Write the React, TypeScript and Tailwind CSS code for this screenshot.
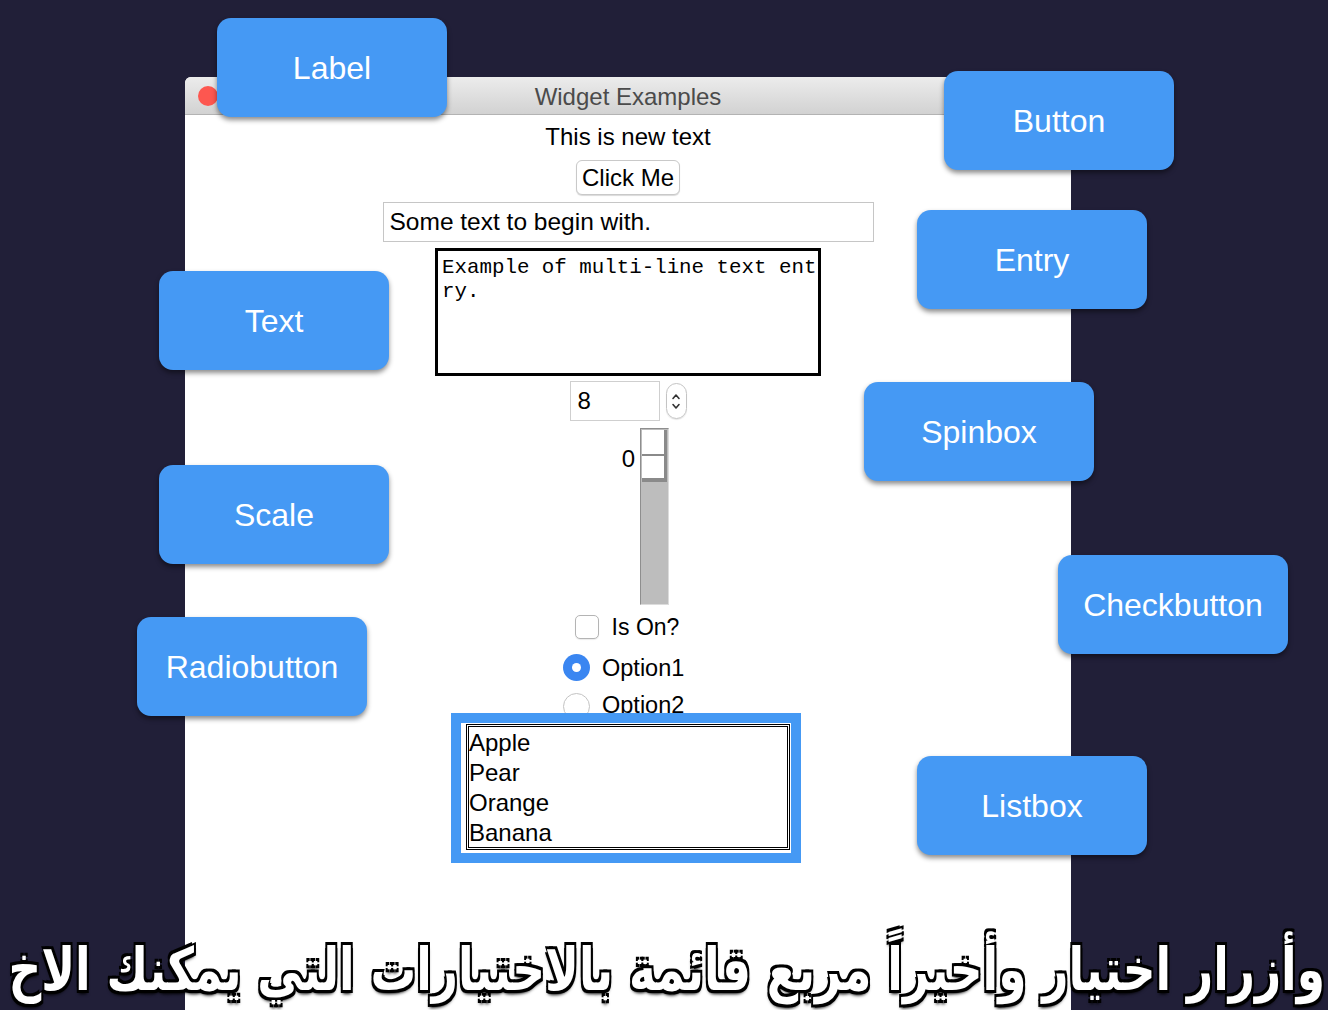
import React from "react";

const callouts = [
  { label: "Label", pos: "left-[217px] top-[18px]" },
  { label: "Button", pos: "left-[944px] top-[71px]" },
  { label: "Entry", pos: "left-[917px] top-[210px]" },
  { label: "Text", pos: "left-[159px] top-[271px]" },
  { label: "Spinbox", pos: "left-[864px] top-[382px]" },
  { label: "Scale", pos: "left-[159px] top-[465px]" },
  { label: "Checkbutton", pos: "left-[1058px] top-[555px]" },
  { label: "Radiobutton", pos: "left-[137px] top-[617px]" },
  { label: "Listbox", pos: "left-[917px] top-[756px]" },
];

const fruits = ["Apple", "Pear", "Orange", "Banana"];

function Callout({ label, pos }: { label: string; pos: string }) {
  return (
    <div
      className={`absolute ${pos} w-[230px] h-[99px] rounded-[14px] bg-[#4599f4] shadow-[0_3px_5px_rgba(0,0,0,0.45)] flex items-center justify-center text-white text-[32px] font-['Liberation_Sans',sans-serif]`}
    >
      {label}
    </div>
  );
}

export default function App() {
  return (
    <div className="relative w-[1328px] h-[1010px] overflow-hidden bg-[#211f38] font-['Liberation_Sans',sans-serif]">
      {/* the tk window */}
      <div className="ml-[185px] mt-[77px] w-[886px] h-[933px] bg-white rounded-t-[6px] flex flex-col items-center text-black">
        <div className="w-full h-[38px] shrink-0 rounded-t-[6px] bg-gradient-to-b from-[#ececec] to-[#d2d2d2] border-b border-[#b3b3b3] flex items-center relative">
          <div className="absolute left-[13px] w-[20px] h-[20px] rounded-full bg-[#fd5750]" />
          <div className="w-full text-center text-[24px] text-[#4b4b4b] pt-[2px]">Widget Examples</div>
        </div>

        <div className="mt-[9px] text-[24px] leading-[26px]">This is new text</div>

        <button className="mt-[10px] h-[35px] px-[5px] rounded-[6px] border border-[#c9c9c9] bg-white text-[24px] leading-[30px] shadow-[0_1px_1px_rgba(0,0,0,0.15)]">
          Click Me
        </button>

        <div className="mt-[7px] w-[491px] h-[40px] border border-[#c6c6c6] flex items-center px-[6px] text-[24.5px]">
          Some text to begin with.
        </div>

        <div className="mt-[6px] w-[386px] h-[128px] border-[3px] border-black pl-[4px] pt-[5px] font-['Liberation_Mono',monospace] text-[20.8px] leading-[24px] break-all">
          Example of multi-line text entry.
        </div>

        {/* spinbox */}
        <div className="mt-[5px] flex items-center gap-[6px]">
          <div className="w-[90px] h-[40px] border border-[#cfcfcf] flex items-center pl-[7px] text-[24px]">8</div>
          <div className="w-[21px] h-[36px] rounded-full border border-[#c4c4c4] flex flex-col items-center justify-center gap-[3px] shadow-[0_1px_1px_rgba(0,0,0,0.1)]">
            <svg width="10" height="7" viewBox="0 0 10 7">
              <path d="M2 5.5 L5 2 L8 5.5" fill="none" stroke="#333" strokeWidth="1.6" strokeLinecap="round" strokeLinejoin="round" />
            </svg>
            <svg width="10" height="7" viewBox="0 0 10 7">
              <path d="M2 1.5 L5 5 L8 1.5" fill="none" stroke="#333" strokeWidth="1.6" strokeLinecap="round" strokeLinejoin="round" />
            </svg>
          </div>
        </div>

        {/* scale */}
        <div className="self-start ml-[435px] mt-[7px] flex">
          <div className="w-[15px] mt-[15px] text-right text-[24px] leading-[32px]">0</div>
          <div className="ml-[5px] w-[29px] h-[177px] bg-[#bdbdbd] border border-[#8e8e8e] border-r-[#dcdcdc] border-b-[#dcdcdc] pt-[1px] pl-[1px]">
            <div className="w-[25px] h-[26px] bg-white border-r-[3px] border-b-[2px] border-[#8a8a8a]" />
            <div className="w-[25px] h-[26px] bg-white border-r-[3px] border-b-[4px] border-[#8a8a8a]" />
          </div>
        </div>

        {/* checkbutton */}
        <div className="mt-[9px] flex items-center ml-[-2px]">
          <div className="w-[24px] h-[24px] rounded-[5px] border border-[#b4b4b4] bg-white shadow-[0_1px_1px_rgba(0,0,0,0.08)]" />
          <span className="ml-[13px] text-[23px] leading-[26px]">Is On?</span>
        </div>

        {/* radiobuttons */}
        <div className="self-start ml-[378px] mt-[14px] flex items-center">
          <div className="w-[27px] h-[27px] rounded-full bg-[#3a86f1] flex items-center justify-center">
            <div className="w-[9px] h-[9px] rounded-full bg-white" />
          </div>
          <span className="ml-[12px] text-[23.5px] leading-[26px]">Option1</span>
        </div>
        <div className="self-start ml-[378px] mt-[12px] h-[20px] flex items-start">
          <div className="w-[27px] h-[27px] shrink-0 rounded-full border border-[#c3c3c3] bg-white" />
          <span className="ml-[12px] text-[23.5px] leading-[26px] -mt-[1px]">Option2</span>
        </div>

        {/* listbox */}
        <div className="relative z-10 ml-[-4px] w-[350px] h-[150px] border-[10px] border-[#4599f4] bg-white pl-[5px] pr-[1px] pt-[1px] pb-[3px]">
          <div className="w-full h-full border-[3px] border-double border-black pt-[1px]">
            {fruits.map((f) => (
              <div key={f} className="text-[24px] leading-[30px]">
                {f}
              </div>
            ))}
          </div>
        </div>
      </div>

      {callouts.map((c) => (
        <Callout key={c.label} label={c.label} pos={c.pos} />
      ))}

      {/* subtitle */}
      <div
        dir="rtl"
        className="absolute right-[3px] top-[946px] origin-bottom scale-y-[1.3] whitespace-nowrap text-white font-bold text-[45.5px] leading-[70px] font-['DejaVu_Sans',sans-serif] [text-shadow:-2px_-2px_0_#000,2px_-2px_0_#000,-2px_2px_0_#000,2px_2px_0_#000,0_3px_3px_#000]"
      >
        وأزرار اختيار وأخيراً مربع قائمة بالاختيارات التي يمكنك الاخ
      </div>
    </div>
  );
}
